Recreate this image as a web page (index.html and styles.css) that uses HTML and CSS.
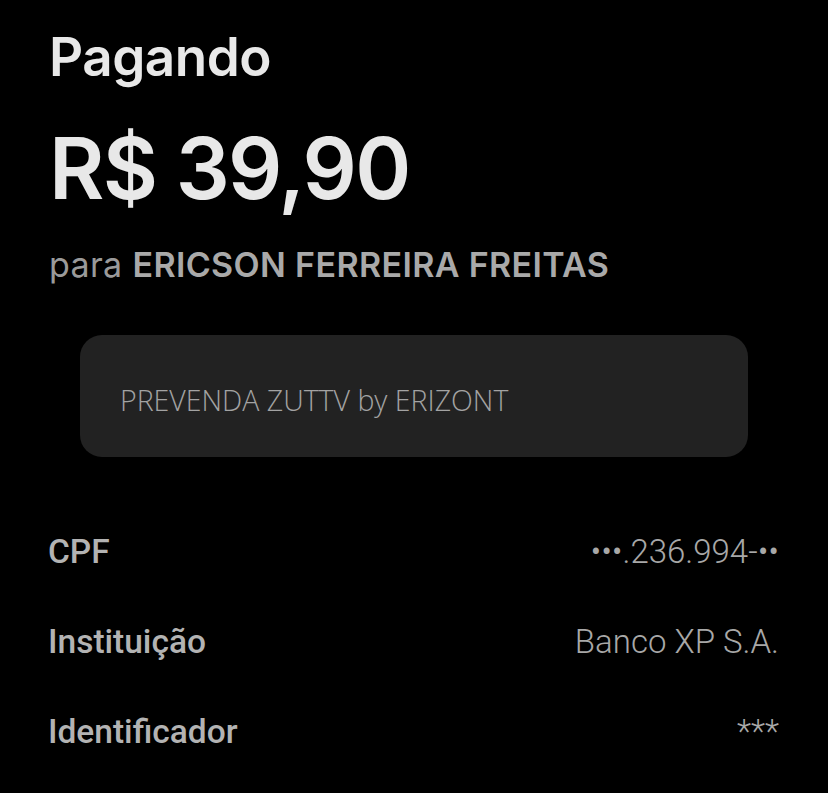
FILE: index.html
```html
<!DOCTYPE html>
<html>
<head>
	<meta charset="utf-8">
	<meta name="viewport" content="width=device-width, initial-scale=1">
	<title>Pagando</title>
	<link rel="stylesheet" href="styles.css">
</head>
<body>

<main>
	<h1 class="title">Pagando</h1>
	<div class="amount">R$ 39,90</div>
	<p class="to">para <strong>ERICSON FERREIRA FREITAS</strong></p>

	<div class="note">PREVENDA ZUTTV by ERIZONT</div>

	<div class="details">
		<div class="row"><span class="label">CPF</span><span class="value">•••.236.994-••</span></div>
		<div class="row"><span class="label">Instituição</span><span class="value">Banco XP S.A.</span></div>
		<div class="row"><span class="label">Identificador</span><span class="value">***</span></div>
	</div>
</main>

</body>
</html>
```

FILE: styles.css
```css
html {
	font-family: Inter, "Noto Sans", sans-serif;
}

body {
	margin: 0;
	background-color: #000000;
	color: #e6e6e6;
}

main {
	padding: 0 49px 0 49px;
}

.title {
	margin: 0;
	padding-top: 25px;
	font-size: 53px;
	font-weight: 600;
	line-height: 64px;
	letter-spacing: -0.5px;
	color: #e8e8e8;
}

.amount {
	margin-top: 32px;
	font-size: 85px;
	font-weight: 600;
	line-height: 96px;
	letter-spacing: -1.8px;
	color: #e8e8e8;
}

.to {
	margin: 28px 0 0 0;
	font-size: 34px;
	line-height: 40px;
	letter-spacing: 0.35px;
	color: #9a9a9a;
}

.to strong {
	font-weight: 600;
	color: #a9a9a9;
}

.note {
	margin: 50px 31px 0 31px;
	height: 122px;
	box-sizing: border-box;
	padding: 7px 40px 0 40px;
	display: flex;
	align-items: center;
	background: #222222;
	border-radius: 22px;
	font-family: "Open Sans", sans-serif;
	font-weight: 300;
	font-size: 28.5px;
	color: #a3a3a3;
}

.details {
	margin-top: 75px;
}

.row {
	display: flex;
	justify-content: space-between;
	align-items: baseline;
	height: 90px;
	font-family: Roboto, sans-serif;
	line-height: 40px;
}

.label {
	margin-left: -1px;
	font-size: 33.5px;
	font-weight: 500;
	color: #b3b3b3;
}

.value {
	font-size: 33px;
	font-weight: 300;
	color: #a8a8a8;
}
```
